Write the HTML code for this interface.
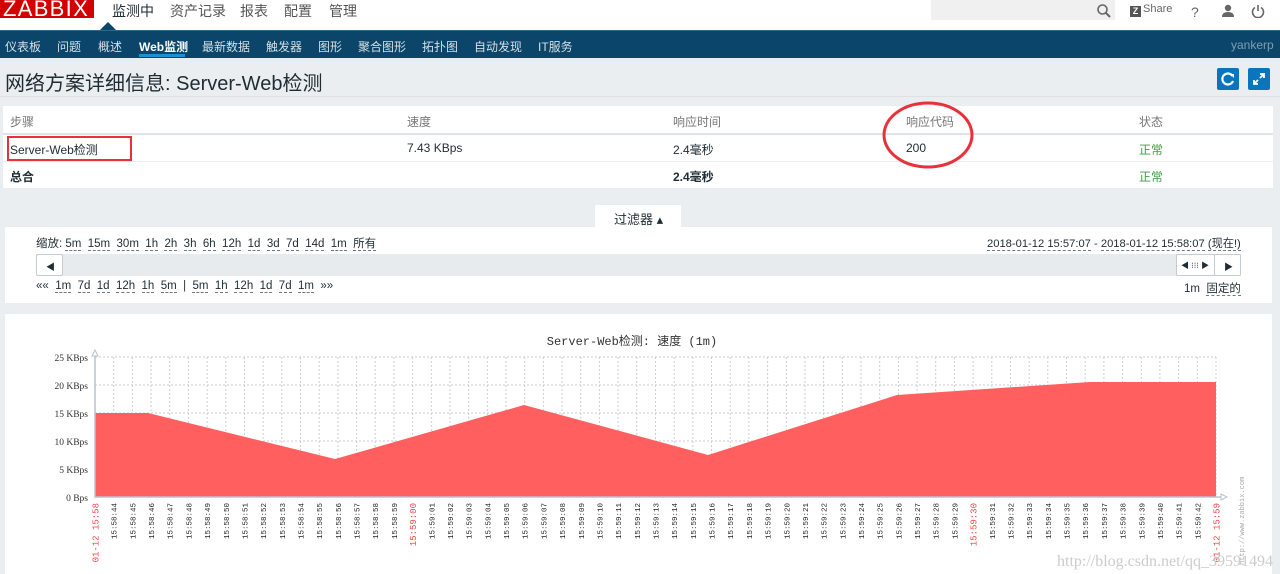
<!DOCTYPE html>
<html><head><meta charset="utf-8">
<style>
*{margin:0;padding:0;box-sizing:border-box}
body{width:1280px;height:574px;overflow:hidden;background:#ebeef0;font-family:"Liberation Sans","Noto Sans CJK SC",sans-serif;font-size:12px;color:#1f2c33;position:relative}
.a{position:absolute;white-space:nowrap}
.hdr{left:0;top:0;width:1280px;height:30px;background:#fff}
.nav{left:0;top:30px;width:1280px;height:28px;background:#0b466a;border-top:1px solid #2f6a8c}
.nav span{position:absolute;top:7px;color:#d5dfe6;font-size:12px}
.box{background:#fff}
u{text-decoration:none;border-bottom:1px dashed #777}
.btn{position:absolute;background:#fff;border:1px solid #c7ccd0;border-radius:2px}
</style></head><body>
<div class="a hdr"></div>
<div class="a" style="left:0;top:0;width:94px;height:18px;background:#d40000;color:#fff;font-size:22px;line-height:17px;padding-left:3px;letter-spacing:1.3px;overflow:hidden">ZABBIX</div>
<div class="a" style="left:112px;top:1px;font-size:14px;color:#1f2c33">监测中</div>
<div class="a" style="left:170px;top:1px;font-size:14px;color:#555">资产记录</div>
<div class="a" style="left:240px;top:1px;font-size:14px;color:#555">报表</div>
<div class="a" style="left:284px;top:1px;font-size:14px;color:#555">配置</div>
<div class="a" style="left:329px;top:1px;font-size:14px;color:#555">管理</div>
<div class="a" style="left:100px;top:22px;width:0;height:0;border-left:8px solid transparent;border-right:8px solid transparent;border-bottom:8px solid #0b466a"></div>
<div class="a" style="left:931px;top:0;width:184px;height:20px;background:#f0f0f0"></div>
<svg class="a" style="left:1096px;top:3px" width="16" height="16"><circle cx="6.5" cy="6.5" r="4.5" fill="none" stroke="#666" stroke-width="1.6"/><line x1="10" y1="10" x2="14" y2="14" stroke="#666" stroke-width="2"/></svg>
<div class="a" style="left:1130px;top:6px;width:11px;height:11px;background:#555;color:#fff;font-size:9px;font-weight:bold;line-height:11px;text-align:center">Z</div>
<div class="a" style="left:1143px;top:3px;font-size:11px;color:#666">Share</div>
<div class="a" style="left:1191px;top:4px;font-size:14px;color:#666">?</div>
<svg class="a" style="left:1221px;top:4px" width="14" height="14"><circle cx="7" cy="4" r="3.2" fill="#666"/><path d="M1 13 Q1 8 7 8 Q13 8 13 13Z" fill="#666"/></svg>
<svg class="a" style="left:1251px;top:4px" width="14" height="14"><path d="M4 3.5 A5.5 5.5 0 1 0 10 3.5" fill="none" stroke="#666" stroke-width="1.6"/><line x1="7" y1="1" x2="7" y2="7" stroke="#666" stroke-width="1.6"/></svg>

<div class="a nav">
<span style="left:5px">仪表板</span><span style="left:57px">问题</span><span style="left:98px">概述</span>
<span style="left:139px;color:#fff;font-weight:bold">Web监测</span><span style="left:202px">最新数据</span><span style="left:266px">触发器</span>
<span style="left:318px">图形</span><span style="left:358px">聚合图形</span><span style="left:422px">拓扑图</span><span style="left:474px">自动发现</span><span style="left:538px">IT服务</span>
<span style="left:1231px;color:#7f9db0">yankerp</span>
</div>
<div class="a" style="left:139px;top:54px;width:46px;height:3px;background:#1a8fd1"></div>

<div class="a" style="left:5px;top:67px;font-size:20px;color:#1f2c33">网络方案详细信息: Server-Web检测</div>
<div class="a" style="left:1217px;top:68px;width:22px;height:22px;background:#0a75bc;border-radius:2px"></div>
<svg class="a" style="left:1217px;top:68px" width="22" height="22"><path d="M15.5 8 A5.5 5.5 0 1 0 16 13" fill="none" stroke="#fff" stroke-width="2.2"/><path d="M13 6 L17 6 L17 10Z" fill="#fff"/></svg>
<div class="a" style="left:1248px;top:68px;width:22px;height:22px;background:#0a75bc;border-radius:2px"></div>
<svg class="a" style="left:1248px;top:68px" width="22" height="22"><path d="M12 6h4v4M16 6l-4 4M10 16H6v-4M6 16l4-4" fill="none" stroke="#fff" stroke-width="1.8"/></svg>
<div class="a" style="left:0;top:96px;width:1280px;height:1px;background:#dde1e4"></div>

<div class="a box" style="left:3px;top:106px;width:1270px;height:82px"></div>
<div class="a" style="left:3px;top:133px;width:1270px;height:2px;background:#e0e4e6"></div>
<div class="a" style="left:3px;top:161px;width:1270px;height:1px;background:#ebeef0"></div>
<div class="a" style="left:10px;top:113px;color:#777">步骤</div>
<div class="a" style="left:407px;top:113px;color:#777">速度</div>
<div class="a" style="left:673px;top:113px;color:#777">响应时间</div>
<div class="a" style="left:906px;top:113px;color:#777">响应代码</div>
<div class="a" style="left:1139px;top:113px;color:#777">状态</div>
<div class="a" style="left:10px;top:141px">Server-Web检测</div>
<div class="a" style="left:407px;top:141px">7.43 KBps</div>
<div class="a" style="left:673px;top:141px">2.4毫秒</div>
<div class="a" style="left:906px;top:141px">200</div>
<div class="a" style="left:1139px;top:141px;color:#429e47">正常</div>
<div class="a" style="left:10px;top:168px;font-weight:bold">总合</div>
<div class="a" style="left:673px;top:168px;font-weight:bold">2.4毫秒</div>
<div class="a" style="left:1139px;top:168px;color:#429e47">正常</div>
<div class="a" style="left:7px;top:136px;width:125px;height:25px;border:2px solid #e8323a"></div>
<svg class="a" style="left:880px;top:100px" width="100" height="72"><ellipse cx="48" cy="35" rx="44" ry="32" fill="none" stroke="#e8323a" stroke-width="3"/></svg>

<div class="a box" style="left:595px;top:205px;width:86px;height:24px"></div>
<div class="a" style="left:614px;top:209px;font-size:13px">过滤器 ▴</div>
<div class="a box" style="left:5px;top:227px;width:1267px;height:76px"></div>
<div class="a" style="left:36px;top:235px;font-size:11.5px">缩放: <u>5m</u>&nbsp; <u>15m</u>&nbsp; <u>30m</u>&nbsp; <u>1h</u>&nbsp; <u>2h</u>&nbsp; <u>3h</u>&nbsp; <u>6h</u>&nbsp; <u>12h</u>&nbsp; <u>1d</u>&nbsp; <u>3d</u>&nbsp; <u>7d</u>&nbsp; <u>14d</u>&nbsp; <u>1m</u>&nbsp; <u>所有</u></div>
<div class="a" style="left:987px;top:235px;font-size:11.2px"><u>2018-01-12 15:57:07</u> - <u>2018-01-12 15:58:07</u> <u>(现在!)</u></div>
<div class="a" style="left:36px;top:254px;width:1205px;height:22px;background:#e8ebed"></div>
<div class="btn" style="left:36px;top:254px;width:27px;height:22px"></div>
<div class="a" style="left:46px;top:260px;font-size:9px">◀</div>
<div class="btn" style="left:1176px;top:254px;width:39px;height:22px"></div>
<div class="a" style="left:1181px;top:260px;font-size:8px">◀ ⁝⁝⁝ ▶</div>
<div class="btn" style="left:1214px;top:254px;width:27px;height:22px"></div>
<div class="a" style="left:1224px;top:260px;font-size:9px">▶</div>
<div class="a" style="left:36px;top:280px;font-size:11.5px">«« &nbsp;<u>1m</u>&nbsp; <u>7d</u>&nbsp; <u>1d</u>&nbsp; <u>12h</u>&nbsp; <u>1h</u>&nbsp; <u>5m</u>&nbsp; | &nbsp;<u>5m</u>&nbsp; <u>1h</u>&nbsp; <u>12h</u>&nbsp; <u>1d</u>&nbsp; <u>7d</u>&nbsp; <u>1m</u>&nbsp; »»</div>
<div class="a" style="left:1184px;top:280px;font-size:11.5px">1m &nbsp;<u>固定的</u></div>

<div class="a box" style="left:5px;top:314px;width:1267px;height:260px"></div>
<svg class="a" style="left:0;top:0" width="1280" height="574" font-family="'Liberation Mono','Noto Sans CJK SC',monospace">
<text x="632" y="345" font-size="12" fill="#333" text-anchor="middle">Server-Web检测: 速度 (1m)</text>
<g fill="#333" font-size="9.5" text-anchor="end" font-family="'Liberation Serif',serif">
<text x="88" y="361">25 KBps</text><text x="88" y="389">20 KBps</text><text x="88" y="417">15 KBps</text><text x="88" y="445">10 KBps</text><text x="88" y="473">5 KBps</text><text x="88" y="501">0 Bps</text>
</g>
<path d="M95 357H1216M95 385H1216M95 413H1216M95 441H1216M95 469H1216M113.7 357V497M132.4 357V497M151 357V497M169.7 357V497M188.4 357V497M207.1 357V497M225.8 357V497M244.5 357V497M263.1 357V497M281.8 357V497M300.5 357V497M319.2 357V497M337.9 357V497M356.6 357V497M375.2 357V497M393.9 357V497M412.6 357V497M431.3 357V497M450 357V497M468.7 357V497M487.3 357V497M506 357V497M524.7 357V497M543.4 357V497M562.1 357V497M580.8 357V497M599.4 357V497M618.1 357V497M636.8 357V497M655.5 357V497M674.2 357V497M692.9 357V497M711.5 357V497M730.2 357V497M748.9 357V497M767.6 357V497M786.3 357V497M805 357V497M823.6 357V497M842.3 357V497M861 357V497M879.7 357V497M898.4 357V497M917.1 357V497M935.7 357V497M954.4 357V497M973.1 357V497M991.8 357V497M1010.5 357V497M1029.2 357V497M1047.8 357V497M1066.5 357V497M1085.2 357V497M1103.9 357V497M1122.6 357V497M1141.3 357V497M1159.9 357V497M1178.6 357V497M1197.3 357V497M1216 357V497" stroke="#c8cfd6" stroke-width="1" stroke-dasharray="2,2" fill="none"/>
<polygon points="95,413 148,413 335,459 524,405 708,455 897,395 1090,382 1216,382 1216,497 95,497" fill="#ff5f5f"/>
<path d="M95 352V497H1222" stroke="#b8c2cc" stroke-width="1.5" fill="none"/>
<path d="M92 356L95 350L98 356Z M1221 494L1227 497L1221 500Z" fill="#fff" stroke="#b8c2cc"/>
<g font-size="7.5" fill="#222" text-anchor="end">
<text transform="translate(116.7,503) rotate(-90)">15:58:44</text><text transform="translate(135.4,503) rotate(-90)">15:58:45</text><text transform="translate(154,503) rotate(-90)">15:58:46</text><text transform="translate(172.7,503) rotate(-90)">15:58:47</text><text transform="translate(191.4,503) rotate(-90)">15:58:48</text><text transform="translate(210.1,503) rotate(-90)">15:58:49</text><text transform="translate(228.8,503) rotate(-90)">15:58:50</text><text transform="translate(247.5,503) rotate(-90)">15:58:51</text><text transform="translate(266.1,503) rotate(-90)">15:58:52</text><text transform="translate(284.8,503) rotate(-90)">15:58:53</text><text transform="translate(303.5,503) rotate(-90)">15:58:54</text><text transform="translate(322.2,503) rotate(-90)">15:58:55</text><text transform="translate(340.9,503) rotate(-90)">15:58:56</text><text transform="translate(359.6,503) rotate(-90)">15:58:57</text><text transform="translate(378.2,503) rotate(-90)">15:58:58</text><text transform="translate(396.9,503) rotate(-90)">15:58:59</text>
<text transform="translate(434.3,503) rotate(-90)">15:59:01</text><text transform="translate(453,503) rotate(-90)">15:59:02</text><text transform="translate(471.7,503) rotate(-90)">15:59:03</text><text transform="translate(490.3,503) rotate(-90)">15:59:04</text><text transform="translate(509,503) rotate(-90)">15:59:05</text><text transform="translate(527.7,503) rotate(-90)">15:59:06</text><text transform="translate(546.4,503) rotate(-90)">15:59:07</text><text transform="translate(565.1,503) rotate(-90)">15:59:08</text><text transform="translate(583.8,503) rotate(-90)">15:59:09</text><text transform="translate(602.4,503) rotate(-90)">15:59:10</text><text transform="translate(621.1,503) rotate(-90)">15:59:11</text><text transform="translate(639.8,503) rotate(-90)">15:59:12</text><text transform="translate(658.5,503) rotate(-90)">15:59:13</text><text transform="translate(677.2,503) rotate(-90)">15:59:14</text><text transform="translate(695.9,503) rotate(-90)">15:59:15</text><text transform="translate(714.5,503) rotate(-90)">15:59:16</text><text transform="translate(733.2,503) rotate(-90)">15:59:17</text><text transform="translate(751.9,503) rotate(-90)">15:59:18</text><text transform="translate(770.6,503) rotate(-90)">15:59:19</text><text transform="translate(789.3,503) rotate(-90)">15:59:20</text><text transform="translate(808,503) rotate(-90)">15:59:21</text><text transform="translate(826.6,503) rotate(-90)">15:59:22</text><text transform="translate(845.3,503) rotate(-90)">15:59:23</text><text transform="translate(864,503) rotate(-90)">15:59:24</text><text transform="translate(882.7,503) rotate(-90)">15:59:25</text><text transform="translate(901.4,503) rotate(-90)">15:59:26</text><text transform="translate(920.1,503) rotate(-90)">15:59:27</text><text transform="translate(938.7,503) rotate(-90)">15:59:28</text><text transform="translate(957.4,503) rotate(-90)">15:59:29</text>
<text transform="translate(994.8,503) rotate(-90)">15:59:31</text><text transform="translate(1013.5,503) rotate(-90)">15:59:32</text><text transform="translate(1032.2,503) rotate(-90)">15:59:33</text><text transform="translate(1050.8,503) rotate(-90)">15:59:34</text><text transform="translate(1069.5,503) rotate(-90)">15:59:35</text><text transform="translate(1088.2,503) rotate(-90)">15:59:36</text><text transform="translate(1106.9,503) rotate(-90)">15:59:37</text><text transform="translate(1125.6,503) rotate(-90)">15:59:38</text><text transform="translate(1144.3,503) rotate(-90)">15:59:39</text><text transform="translate(1162.9,503) rotate(-90)">15:59:40</text><text transform="translate(1181.6,503) rotate(-90)">15:59:41</text><text transform="translate(1200.3,503) rotate(-90)">15:59:42</text>
</g>
<g font-size="9" fill="#f04848" text-anchor="end">
<text transform="translate(98.5,503) rotate(-90)">01-12 15:58</text>
<text transform="translate(416,503) rotate(-90)">15:59:00</text>
<text transform="translate(976.5,503) rotate(-90)">15:59:30</text>
<text transform="translate(1219.5,503) rotate(-90)">01-12 15:59</text>
</g>
<text transform="translate(1244,565) rotate(-90)" font-size="7" fill="#aaa">http://www.zabbix.com</text>
<text x="1057" y="566" font-size="16" fill="#ccc" font-family="'Liberation Serif',serif">http://blog.csdn.net/qq_39591494</text>
</svg>
</body></html>
